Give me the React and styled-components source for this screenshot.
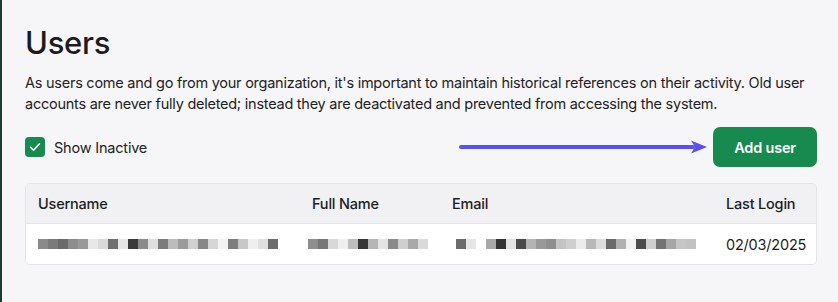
import React from "react";
import styled, { createGlobalStyle } from "styled-components";

const GlobalStyle = createGlobalStyle`
  html, body { margin: 0; padding: 0; background: #f6f6f8; }
  body { font-family: Inter, "Open Sans", sans-serif; color: #1c1c1e; }
`;

const Page = styled.div`
  min-height: 302px;
  box-sizing: border-box;
  border-left: 2px solid #1f3b33;
  padding: 21px 21px 0 23px;
`;

const Title = styled.h1`
  margin: 0;
  font-size: 31px;
  font-weight: 500;
  letter-spacing: -0.3px;
  line-height: 44px;
`;

const Intro = styled.p`
  margin: 7px -10px 0 0;
  font-size: 14.5px;
  letter-spacing: -0.25px;
  line-height: 21px;
  color: #222;
`;

const Toolbar = styled.div`
  display: flex;
  align-items: center;
  justify-content: space-between;
  margin-top: 13px;
`;

const CheckLabel = styled.label`
  display: flex;
  align-items: center;
  gap: 9px;
  font-size: 14.5px;
  letter-spacing: -0.2px;
  color: #222;
`;

const CheckBox = styled.span`
  width: 20px;
  height: 20px;
  border-radius: 4px;
  background: #178a50;
  display: flex;
  align-items: center;
  justify-content: center;
`;

const Actions = styled.div`
  display: flex;
  align-items: center;
  gap: 4px;
`;

const AddButton = styled.button`
  width: 104px;
  height: 40px;
  border: none;
  border-radius: 7px;
  background: #178a50;
  color: #fff;
  font-family: inherit;
  font-size: 14.5px;
  font-weight: 600;
  letter-spacing: -0.2px;
`;

const Table = styled.div`
  margin-top: 16px;
  border: 1px solid #e4e4e7;
  border-radius: 5px;
  overflow: hidden;
  background: #fff;
`;

const Row = styled.div`
  display: grid;
  grid-template-columns: 274px 140px 274px 1fr;
  align-items: center;
  height: ${(p) => (p.$head ? 39 : 40)}px;
  padding: 0 12px;
  background: ${(p) => (p.$head ? "#f1f1f3" : "#fff")};
  border-bottom: ${(p) => (p.$head ? "1px solid #e4e4e7" : "none")};
  font-size: 14.5px;
  letter-spacing: -0.2px;
  font-weight: ${(p) => (p.$head ? 500 : 400)};
`;

const Mosaic = styled.div`
  display: flex;
  height: 10px;
  margin-left: ${(p) => p.$offset || 0}px;
`;

const Tile = styled.span`
  width: 10px;
  height: 10px;
`;

const userTiles = ["#8a8a8a","#7a7a7a","#6a6a6a","#8d8d8d","#9a9a9a","#e8e8e8","#d9d9d9","#707070","#e6e6e6","#3a3a3a","#8a8a8a","#dedede","#7c7c7c","#bcbcbc","#9c9c9c","#d0d0d0","#888","#d6d6d6","#f2f2f2","#7d7d7d","#c8c8c8","#efefef","#e0e0e0","#6c6c6c"];
const nameTiles = ["#8e8e8e","#777","#d8d8d8","#eeeeee","#bdbdbd","#363636","#b6b6b6","#e4e4e4","#8a8a8a","#cfcfcf","#a9a9a9","#dadada"];
const mailTiles = ["#fff","#6c6c6c","#e6e6e6","#fff","#a8a8a8","#333","#e2e2e2","#4a4a4a","#b4b4b4","#999","#8e8e8e","#c4c4c4","#cfcfcf","#ececec","#b8b8b8","#dcdcdc","#6a6a6a","#b0b0b0","#f2f2f2","#4b4b4b","#cfcfcf","#737373","#a6a6a6","#c6c6c6","#c2c2c2"];

function Pixels({ tiles, offset }) {
  return (
    <Mosaic $offset={offset}>
      {tiles.map((c, i) => (
        <Tile key={i} style={{ background: c }} />
      ))}
    </Mosaic>
  );
}

export default function App() {
  return (
    <Page>
      <GlobalStyle />
      <Title>Users</Title>
      <Intro>
        As users come and go from your organization, it's important to maintain historical references on their activity. Old user
        accounts are never fully deleted; instead they are deactivated and prevented from accessing the system.
      </Intro>
      <Toolbar>
        <CheckLabel>
          <CheckBox>
            <svg width="14" height="14" viewBox="0 0 14 14" fill="none">
              <path d="M2.5 7.2l3 3 6-6.4" stroke="#fff" strokeWidth="1.6" strokeLinecap="round" strokeLinejoin="round" />
            </svg>
          </CheckBox>
          Show Inactive
        </CheckLabel>
        <Actions>
          <svg width="252" height="16" viewBox="0 0 252 16">
            <line x1="4" y1="8" x2="236" y2="8" stroke="#5a4ff0" strokeWidth="4" strokeLinecap="round" />
            <path d="M234 1.5L250 8l-16 6.5 4-6.5z" fill="#5a4ff0" />
          </svg>
          <AddButton>Add user</AddButton>
        </Actions>
      </Toolbar>
      <Table>
        <Row $head>
          <span>Username</span>
          <span>Full Name</span>
          <span>Email</span>
          <span>Last Login</span>
        </Row>
        <Row>
          <Pixels tiles={userTiles} />
          <Pixels tiles={nameTiles} offset={-4} />
          <Pixels tiles={mailTiles} offset={-6} />
          <span>02/03/2025</span>
        </Row>
      </Table>
    </Page>
  );
}
